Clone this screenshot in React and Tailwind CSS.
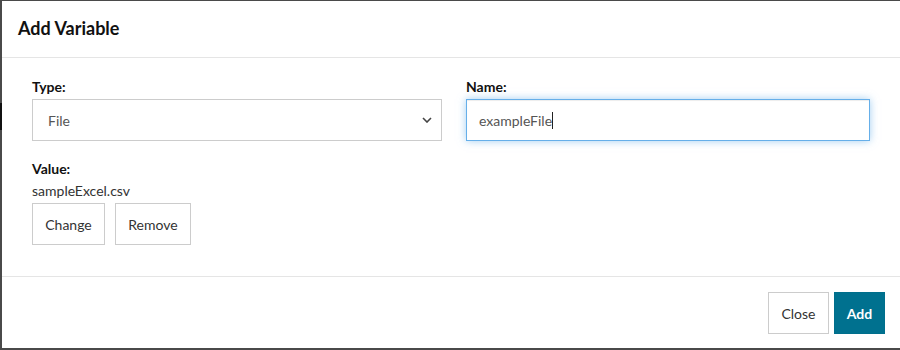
export default function App() {
  return (
    <div className="h-[350px] w-[900px] overflow-hidden bg-[#4a4a4a] flex" style={{ fontFamily: "Lato, 'Noto Sans', sans-serif" }}>
      <div className="w-[2px] shrink-0 flex flex-col">
        <div className="h-[103px]" />
        <div className="h-[27px] bg-[#111]" />
      </div>
      <div className="mt-[1px] h-[347px] w-[898px] shrink-0 bg-white flex flex-col">
        <div className="h-[57px] border-b border-[#e5e5e5] px-[16px] flex items-center">
          <h4 className="text-[18px] font-bold text-[#111] leading-none mt-[-3px]">Add Variable</h4>
        </div>
        <div className="h-[219px] border-b border-[#e5e5e5] px-[30px] pt-[19px]">
          <div className="grid grid-cols-[410px_404px] gap-x-[24px]">
            <div>
              <div className="text-[14px] font-bold text-[#111] leading-[20px] mb-[2px]">Type:</div>
              <div className="h-[42px] border border-[#ccc] flex items-center justify-between pl-[15px] pr-[9px] text-[14px] text-[#555]">
                <span>File</span>
                <svg width="10" height="6" viewBox="0 0 10 6" fill="none" stroke="#444" strokeWidth="1.6"><path d="M1 1l4 4 4-4" /></svg>
              </div>
            </div>
            <div>
              <div className="text-[14px] font-bold text-[#111] leading-[20px] mb-[2px]">Name:</div>
              <div className="h-[42px] border border-[#66afe9] shadow-[inset_0_1px_1px_rgba(0,0,0,0.075),0_0_8px_rgba(102,175,233,0.6)] flex items-center pl-[12px] text-[14px] text-[#555]">
                <span>exampleFile</span>
                <span className="inline-block w-[1px] h-[17px] bg-[#222]" />
              </div>
            </div>
          </div>
          <div className="mt-[18px] text-[14px] font-bold text-[#111] leading-[20px]">Value:</div>
          <div className="text-[14px] text-[#333] leading-[20px] mt-[2px]">sampleExcel.csv</div>
          <div className="flex gap-[10px] mt-[2px]">
            <button className="h-[42px] w-[73px] border border-[#ccc] bg-white text-[14px] text-[#333]">Change</button>
            <button className="h-[42px] w-[76px] border border-[#ccc] bg-white text-[14px] text-[#333]">Remove</button>
          </div>
        </div>
        <div className="flex justify-end gap-[5px] px-[15px] pt-[15px]">
          <button className="h-[42px] w-[61px] border border-[#ccc] bg-white text-[14px] text-[#333]">Close</button>
          <button className="h-[42px] w-[51px] border border-[#006f8c] bg-[#00718f] text-[14px] font-bold text-white">Add</button>
        </div>
      </div>
    </div>
  );
}
